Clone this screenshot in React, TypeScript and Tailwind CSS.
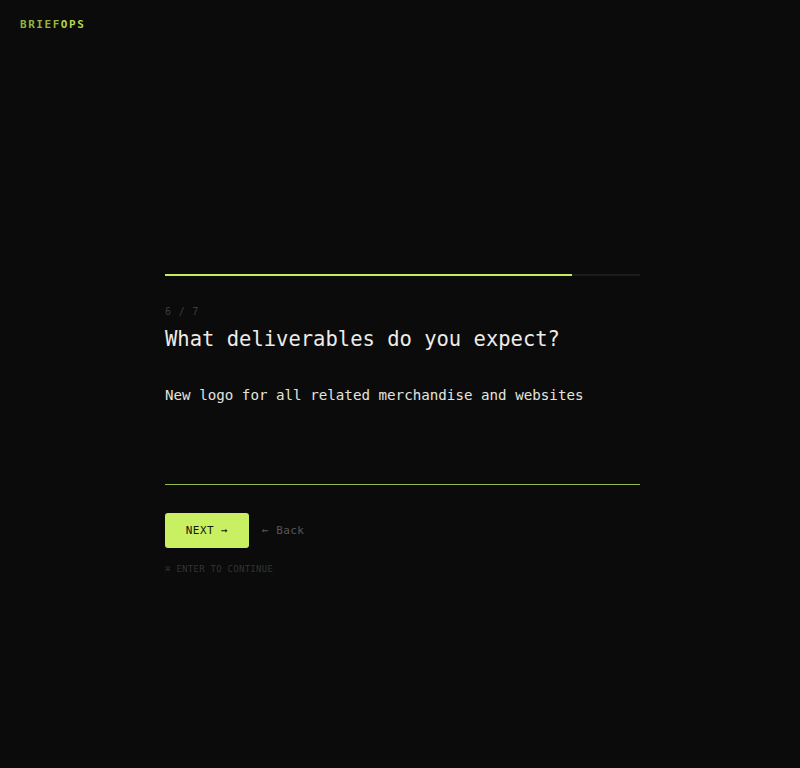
import React from "react";

const mono = { fontFamily: '"DejaVu Sans Mono", "Liberation Mono", monospace' };

export default function App() {
  const step = 6;
  const total = 7;
  const pct = (step / total) * 100;

  return (
    <div className="min-h-screen w-full bg-[#0b0b0b] text-[#e6e6e0]" style={mono}>
      <header className="px-5 pt-[19px]">
        <div className="text-[11px] leading-[12px] font-bold tracking-[0.14em]">
          <span className="text-[#93b53e]">BRIEF</span>
          <span className="text-[#b4d64c]">OPS</span>
        </div>
      </header>

      <main className="ml-[165px] mt-[243px] w-[475px]">
        {/* progress track */}
        <div className="h-[2px] w-full bg-[#1c1c1c]">
          <div className="h-full bg-[#c4ec5c]" style={{ width: `${pct}%` }} />
        </div>

        <div className="mt-[30px] text-[10px] leading-[12px] tracking-[0.08em] text-[#3d3d3d]">
          {step} / {total}
        </div>

        <h1 className="mt-[6px] text-[20.5px] leading-[30px] font-normal text-[#ecece6]">
          What deliverables do you expect?
        </h1>

        <textarea
          className="mt-[30px] block h-[101px] w-full resize-none border-0 border-b border-[#95bb4c] bg-transparent p-0 text-[14.2px] leading-[22px] text-[#e4e4de] outline-none"
          style={mono}
          defaultValue="New logo for all related merchandise and websites"
        />

        <div className="mt-[28px] flex items-center gap-[13px]">
          <button className="flex h-[35px] w-[84px] items-center justify-center rounded-[3px] bg-[#c8f062] pt-[2px] text-[11px] tracking-[0.04em] text-[#141a08]">
            NEXT →
          </button>
          <button className="pt-[2px] text-[11px] tracking-[0.04em] text-[#575757]">← Back</button>
        </div>

        <div className="mt-[15px] text-[9px] leading-[12px] tracking-[0.03em] text-[#343434]">
          ⌘ ENTER TO CONTINUE
        </div>
      </main>
    </div>
  );
}
